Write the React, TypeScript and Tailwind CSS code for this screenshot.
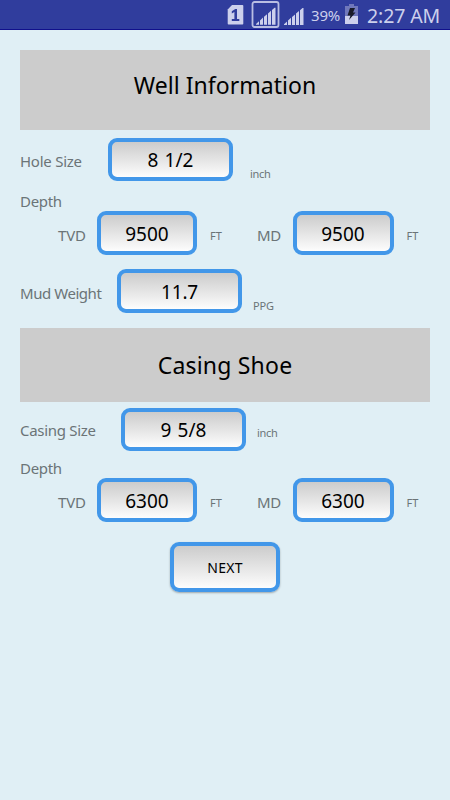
import React from "react";

const bars = "M0 17V16.2L3 13.4V17ZM4 17V12.6L7 9.8V17ZM8 17V9L11 6.4V17ZM12 17V5.6L15 3V17ZM16 17V2.2L18.5 0H19.5V17Z";

function StatusBar() {
  return (
    <div className="flex h-[30px] shrink-0 items-start border-b border-[#10108c] bg-[#303d9d] text-[#ccd0ec]">
      <svg width="17" height="20" viewBox="0 0 17 20" className="mt-[5px] ml-[227px] shrink-0">
        <path d="M5 0H15.5Q16.3 0 16.3 1V18.6Q16.3 19.5 15.5 19.5H1.5Q.7 19.5 .7 18.6V4.5Z" fill="#ccd0ec" />
        <path d="M4.8 6.2 8.3 4H10V14H12.3V16H4.8V14H7.4V7L4.8 8.5Z" fill="#303d9d" />
      </svg>
      <svg width="29" height="28" viewBox="0 0 29 28" className="ml-[7px] shrink-0">
        <rect x="1.5" y="2" width="26" height="25" rx="2" fill="none" stroke="#b9bee3" strokeWidth="1.8" />
        <path d={bars} transform="translate(5 7.8)" fill="#ccd0ec" />
      </svg>
      <svg width="20" height="18" viewBox="0 0 20 18" className="mt-2 ml-1 shrink-0">
        <path d={bars} fill="#ccd0ec" />
      </svg>
      <span className="mt-[5px] ml-[7px] w-[34px] text-[15px] leading-5 tracking-[-0.2px] whitespace-nowrap">39%</span>
      <svg width="13" height="20" viewBox="0 0 13 20" className="mt-[4px] shrink-0">
        <path d="M4 0H9V2H13V20H0V2H4Z" fill="#7078bb" />
        <path d="M0 12H13V20H0Z" fill="#ccd0ec" />
        <path d="M5 4H10L8 8.5H10.5L4 16 5.5 11.5H2.5Z" fill="#191b29" />
      </svg>
      <span className="mt-1 ml-[9px] text-[19.5px] leading-6 tracking-[-0.1px] whitespace-nowrap">2:27 AM</span>
    </div>
  );
}

const field =
  "flex shrink-0 items-center justify-center rounded-[9px] border-4 border-[#4297e9] bg-linear-to-b from-[#cccccc] to-[#fdfdfd] text-black";

function DepthRow({ tvd, md }: { tvd: string; md: string }) {
  return (
    <div className="flex h-11 items-center pl-[37px]">
      <span className="mt-1 w-10 pl-px text-[15px] leading-5 tracking-[-0.2px]">TVD</span>
      <div className={`${field} h-11 w-[100px] pt-0.5 text-[19px]`}>{tvd}</div>
      <span className="mt-1.5 ml-[13px] w-[47px] text-[11px] leading-4">FT</span>
      <span className="mt-1 w-[35.5px] text-[15px] leading-5 tracking-[-0.3px]">MD</span>
      <div className={`${field} h-11 w-[101px] pt-0.5 text-[19px]`}>{md}</div>
      <span className="mt-1.5 ml-[13px] text-[11px] leading-4">FT</span>
    </div>
  );
}

export default function App() {
  return (
    <div className="flex h-[800px] w-[450px] flex-col overflow-hidden bg-[#e0eff5] font-['Noto_Sans',sans-serif] text-[#6b7477]">
      <StatusBar />
      <main className="flex flex-col px-5 pt-5">
        <h1 className="h-20 bg-[#cccccc] pt-[19px] text-center text-[23px] leading-8 tracking-[0.05px] text-black">Well Information</h1>

        <div className="mt-2 flex h-[43px] items-start">
          <span className="mt-[13px] w-[88px] text-[15px] leading-5 tracking-[-0.25px] whitespace-nowrap">Hole Size</span>
          <div className={`${field} h-[43px] w-[125px] pt-px text-[19px] tracking-[0.1px] [word-spacing:1px]`}>8 1/2</div>
          <span className="mt-[28px] ml-[17px] text-[11px] leading-4 tracking-[-0.3px]">inch</span>
        </div>

        <p className="mt-[10px] h-5 text-[15px] leading-5 tracking-[-0.3px]">Depth</p>
        <DepthRow tvd="9500" md="9500" />

        <div className="mt-[14px] flex h-11 items-start">
          <span className="mt-[14px] w-[97px] text-[15px] leading-5 tracking-[-0.45px] whitespace-nowrap">Mud Weight</span>
          <div className={`${field} h-11 w-[125px] pt-0.5 text-[19px] tracking-[-0.2px]`}>11.7</div>
          <span className="mt-[29px] ml-[11px] text-[11px] leading-4 tracking-[-0.2px]">PPG</span>
        </div>

        <h1 className="mt-[15px] h-[74px] bg-[#cccccc] pt-[21px] text-center text-[23px] leading-8 tracking-[0.2px] text-black">Casing Shoe</h1>

        <div className="mt-[6px] flex h-[43px] items-start">
          <span className="mt-[12px] w-[101px] text-[15px] leading-5 tracking-[-0.3px] whitespace-nowrap">Casing Size</span>
          <div className={`${field} h-[43px] w-[125px] pt-px text-[19px] tracking-[0.1px] [word-spacing:1px]`}>9 5/8</div>
          <span className="mt-[17px] ml-[11px] text-[11px] leading-4 tracking-[-0.3px]">inch</span>
        </div>

        <p className="mt-[7px] h-5 text-[15px] leading-5 tracking-[-0.3px]">Depth</p>
        <DepthRow tvd="6300" md="6300" />

        <button className={`${field} mt-5 h-[50px] w-[110px] self-center text-[14px] tracking-[0.3px] shadow-[0_1px_2px_rgba(0,0,0,0.3)]`}>
          NEXT
        </button>
      </main>
    </div>
  );
}
